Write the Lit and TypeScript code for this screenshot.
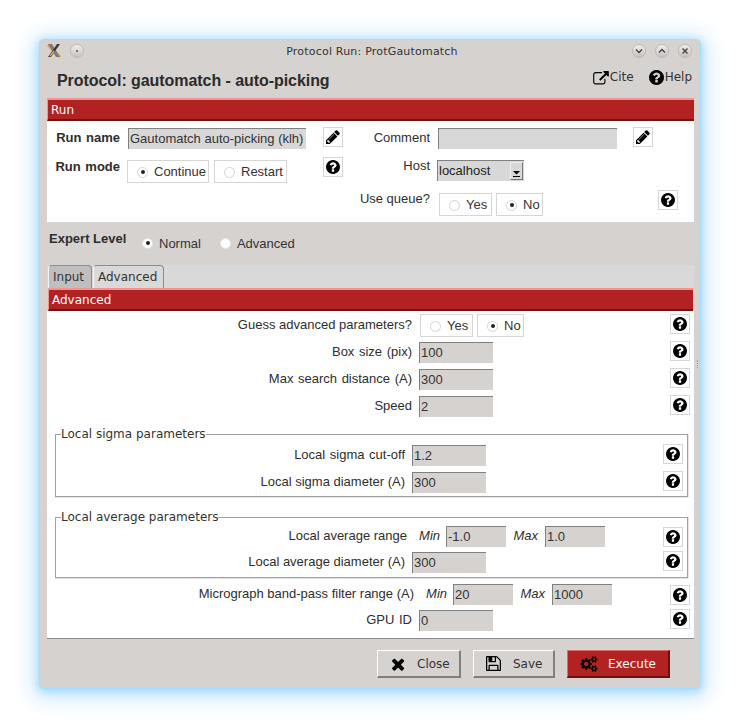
import {LitElement, html, css, svg} from 'lit';
import {customElement} from 'lit/decorators.js';

const HELP = svg`<path d="M896 1376v-192q0-14-9-23t-23-9h-192q-14 0-23 9t-9 23v192q0 14 9 23t23 9h192q14 0 23-9t9-23zm256-672q0-88-55.5-163t-138.5-116-170-41q-243 0-371 213-15 24 8 42l132 100q7 6 19 6 16 0 25-12 53-68 86-92 34-24 86-24 48 0 85.5 26t37.5 59q0 38-20 61t-68 45q-63 28-115.5 86.5t-52.5 125.5v36q0 14 9 23t23 9h192q14 0 23-9t9-23q0-19 21.5-49.5t54.5-49.5q32-18 49-28.5t46-35 44.5-48 28-60.5 12.5-81zm384 192q0 209-103 385.5t-279.5 279.5-385.5 103-385.5-103-279.5-279.5-103-385.5 103-385.5 279.5-279.5 385.5-103 385.5 103 279.5 279.5 103 385.5z"/>`;
const PENCIL = svg`<path d="M491 1536l91-91-235-235-91 91v107h128v128h107zm523-928q0-22-22-22-10 0-17 7l-542 542q-7 7-7 17 0 22 22 22 10 0 17-7l542-542q7-7 7-17zm-54-192l416 416-832 832h-416v-416zm683 96q0 53-37 90l-166 166-416-416 166-165q36-38 90-38 53 0 91 38l235 234q37 39 37 91z"/>`;
const TIMES = svg`<path d="M1490 1322q0 40-28 68l-136 136q-28 28-68 28t-68-28l-294-294-294 294q-28 28-68 28t-68-28l-136-136q-28-28-28-68t28-68l294-294-294-294q-28-28-28-68t28-68l136-136q28-28 68-28t68 28l294 294 294-294q28-28 68-28t68 28l136 136q28 28 28 68t-28 68l-294 294 294 294q28 28 28 68z"/>`;
const FLOPPY = svg`<path d="M512 1536h768v-384h-768v384zm896 0h128v-896q0-14-10-38.5t-20-34.5l-281-281q-10-10-34-20t-39-10v416q0 40-28 68t-68 28h-576q-40 0-68-28t-28-68v-416h-128v1280h128v-416q0-40 28-68t68-28h832q40 0 68 28t28 68v416zm-384-928v-320q0-13-9.5-22.5t-22.5-9.5h-192q-13 0-22.5 9.5t-9.5 22.5v320q0 13 9.5 22.5t22.5 9.5h192q13 0 22.5-9.5t9.5-22.5zm640 32v928q0 40-28 68t-68 28h-1344q-40 0-68-28t-28-68v-1344q0-40 28-68t68-28h928q40 0 88 20t76 48l280 280q28 28 48 76t20 88z"/>`;
const LINK = svg`<path d="M1408 928v320q0 119-84.5 203.5t-203.5 84.5h-832q-119 0-203.5-84.5t-84.5-203.5v-832q0-119 84.5-203.5t203.5-84.5h704q14 0 23 9t9 23v64q0 14-9 23t-23 9h-704q-66 0-113 47t-47 113v832q0 66 47 113t113 47h832q66 0 113-47t47-113v-320q0-14 9-23t23-9h64q14 0 23 9t9 23zm384-864v512q0 26-19 45t-45 19-45-19l-176-176-652 652q-10 10-23 10t-23-10l-114-114q-10-10-10-23t10-23l652-652-176-176q-19-19-19-45t19-45 45-19h512q26 0 45 19t19 45z"/>`;
const COGS = svg`<path d="M896 896q0-106-75-181t-181-75-181 75-75 181 75 181 181 75 181-75 75-181zm768 512q0-52-38-90t-90-38-90 38-38 90q0 53 37.5 90.5t90.5 37.5 90.5-37.5 37.5-90.5zm0-1024q0-52-38-90t-90-38-90 38-38 90q0 53 37.5 90.5t90.5 37.5 90.5-37.5 37.5-90.5zm-384 421v185q0 10-7 19.5t-16 10.5l-155 24q-11 35-32 76 34 48 90 115 7 11 7 20 0 12-7 19-23 30-82.5 89.5t-78.5 59.5q-11 0-21-7l-115-90q-37 19-77 31-11 108-23 155-7 24-30 24h-186q-11 0-20-7.5t-10-17.5l-23-153q-34-10-75-31l-118 89q-7 7-20 7-11 0-21-8-144-133-144-160 0-9 7-19 10-14 41-53t47-61q-23-44-35-82l-152-24q-10-1-17-9.5t-7-19.5v-185q0-10 7-19.5t16-10.5l155-24q11-35 32-76-34-48-90-115-7-11-7-20 0-12 7-20 22-30 82-89t79-59q11 0 21 7l115 90q34-18 77-32 11-108 23-154 7-24 30-24h186q11 0 20 7.5t10 17.5l23 153q34 10 75 31l118-89q8-7 20-7 11 0 21 8 144 133 144 160 0 8-7 19-12 16-42 54t-45 60q23 48 34 82l152 23q10 2 17 10.5t7 19.5zm640 533v140q0 16-149 31-12 27-30 52 51 113 51 138 0 4-4 7-122 71-124 71-8 0-46-47t-52-68q-20 2-30 2t-30-2q-14 21-52 68t-46 47q-2 0-124-71-4-3-4-7 0-25 51-138-18-25-30-52-149-15-149-31v-140q0-16 149-31 13-29 30-52-51-113-51-138 0-4 4-7 4-2 35-20t59-34 30-16q8 0 46 46.5t52 67.5q20-2 30-2t30 2q51-71 92-112l6-2q4 0 124 70 4 3 4 7 0 25-51 138 17 23 30 52 149 15 149 31zm0-1024v140q0 16-149 31-12 27-30 52 51 113 51 138 0 4-4 7-122 71-124 71-8 0-46-47t-52-68q-20 2-30 2t-30-2q-14 21-52 68t-46 47q-2 0-124-71-4-3-4-7 0-25 51-138-18-25-30-52-149-15-149-31v-140q0-16 149-31 13-29 30-52-51-113-51-138 0-4 4-7 4-2 35-20t59-34 30-16q8 0 46 46.5t52 67.5q20-2 30-2t30 2q51-71 92-112l6-2q4 0 124 70 4 3 4 7 0 25-51 138 17 23 30 52 149 15 149 31z"/>`;

const helpBtn = (cls = '') => html`
  <span class="icon-btn ${cls}"><svg width="14" height="14" viewBox="0 128 1536 1536">${HELP}</svg></span>
`;
const editBtn = (cls = '') => html`
  <span class="icon-btn ${cls}"><svg width="14" height="14" viewBox="128 128 1536 1536">${PENCIL}</svg></span>
`;
const radioBox = (name: string, width: number, on = false) => html`
  <span class="radio-box" style="width:${width}px"><i class="radio ${on ? 'on' : ''}"></i>${name}</span>
`;
const field = (value: string, cls = 'wide') => html`
  <input class="field ${cls}" .value=${value} readonly />
`;
const label = (text: string, width: number, cls = 'drop3') => html`
  <span class="label ${cls}" style="width:${width}px">${text}</span>
`;

@customElement('app-root')
class AppRoot extends LitElement {
  static override styles = css`
    :host {
      display: block;
      width: 740px;
      height: 728px;
      background: #fff;
      overflow: hidden;
      font-family: 'Liberation Sans', sans-serif;
      font-size: 13px;
      color: #2e2e2e;
    }

    .stage {
      padding: 40px;
    }

    .window {
      position: relative;
      width: 660px;
      height: 648px;
      box-sizing: border-box;
      background: #d6d2d0;
      border-radius: 4px;
      box-shadow: 0 0 1px 1px #a6dcfb, 0 2px 8px 2px #a4dafb, 0 3px 22px 8px #cfeafd;
    }

    .grip {
      position: absolute;
      right: 2px;
      top: 320px;
      height: 8px;
      border-left: 1px dotted #9a9a9a;
    }

    .titlebar {
      height: 22px;
      display: flex;
      align-items: center;
      padding: 0 8px 0 6px;
    }

    .titlebar__text {
      flex: 1;
      text-align: center;
      font-family: 'DejaVu Sans', sans-serif;
      font-size: 11px;
      letter-spacing: 0.2px;
      color: #333;
      padding-left: 6px;
    }

    .titlebar__side {
      display: flex;
      align-items: center;
      gap: 8px;
      width: 60px;
    }

    .titlebar__side--right {
      justify-content: flex-end;
      gap: 9px;
    }

    .wm-btn {
      width: 14px;
      height: 14px;
      display: block;
    }

    .header {
      height: 36px;
      display: flex;
      justify-content: space-between;
      padding: 0 8px 0 17px;
    }

    .header h1 {
      margin: 10px 0 0;
      font-size: 16px;
      line-height: 18px;
      font-weight: 700;
      letter-spacing: -0.06px;
      color: #2b2b2b;
    }

    .links {
      display: flex;
      align-items: flex-start;
      gap: 15px;
      margin-top: 8px;
      font-family: 'DejaVu Sans', sans-serif;
      font-size: 12px;
      line-height: 15px;
      color: #333;
    }

    .links span {
      display: flex;
      align-items: center;
      gap: 1px;
    }

    .panel-title {
      height: 23px;
      box-sizing: border-box;
      background: #b22222;
      border-top: 2px solid #f09494;
      border-left: 1px solid #f09494;
      border-bottom: 2px solid #741212;
      color: #fff;
      font-family: 'DejaVu Sans', sans-serif;
      font-size: 12px;
      line-height: 21px;
      padding-left: 3px;
    }

    .run {
      margin: 0 6px 0 7px;
      background: #fff;
    }

    .run__grid {
      height: 101px;
      box-sizing: border-box;
      padding-top: 6px;
      display: grid;
      grid-template-columns: 80px 196px 20px 87px 203px 20px 5px 20px;
      grid-template-rows: 30px 33px 32px;
      align-items: start;
    }

    .run__label {
      grid-column: 1;
      font-weight: 700;
      line-height: 16px;
      text-align: right;
      width: 73px;
      word-spacing: 1px;
    }

    .run__label2 {
      grid-column: 4;
      line-height: 16px;
      text-align: right;
    }

    .col-2 {
      grid-column: 2;
    }

    .col-3 {
      grid-column: 3;
    }

    .col-5 {
      grid-column: 5;
    }

    .col-6 {
      grid-column: 6;
    }

    .col-8 {
      grid-column: 8;
    }

    .row-1 {
      grid-row: 1;
    }

    .row-2 {
      grid-row: 2;
    }

    .row-3 {
      grid-row: 3;
    }

    .drop1 {
      margin-top: 1px;
    }

    .drop2 {
      margin-top: 2px;
    }

    .drop3 {
      margin-top: 3px;
    }

    .icon-btn {
      width: 20px;
      height: 20px;
      box-sizing: border-box;
      border: 1px solid #d6d6d6;
      background: #fff;
      display: flex;
      align-items: center;
      justify-content: center;
      flex: none;
      fill: #000;
    }

    .field {
      display: block;
      height: 21px;
      box-sizing: border-box;
      padding: 0 0 2px 1px;
      margin: 0;
      border: 0;
      border-top: 1px solid #808080;
      border-left: 1px solid #808080;
      border-radius: 0;
      outline: none;
      background: #d6d2d0;
      color: #333;
      font: 13px 'Liberation Sans', sans-serif;
      flex: none;
    }

    .wide {
      width: 74px;
    }

    .narrow {
      width: 60px;
    }

    .run .field {
      background: #d8d8d8;
    }

    .run .name-field {
      width: 178px;
      margin: 1px 0 0 1px;
    }

    .run .comment-field {
      width: 179px;
      margin: 1px 0 0 8px;
    }

    .combo {
      margin: 3px 0 0 7px;
      width: 87px;
      height: 21px;
      box-sizing: border-box;
      border-top: 1px solid #808080;
      border-left: 1px solid #808080;
      background: #d8d8d8;
      display: flex;
      justify-content: space-between;
      padding: 1px 1px 0 1px;
      line-height: 17px;
      color: #222;
    }

    .combo__arrow {
      width: 13px;
      height: 18px;
      box-sizing: border-box;
      border-top: 1px solid #eee;
      border-left: 1px solid #eee;
      border-right: 1px solid #777;
      border-bottom: 1px solid #777;
      display: flex;
      align-items: flex-end;
      justify-content: center;
      padding-bottom: 2px;
    }

    .radio-row {
      display: flex;
      gap: 4px;
    }

    .radio-row--mode {
      gap: 5px;
    }

    .queue {
      margin-left: 9px;
    }

    .radio-box {
      display: flex;
      align-items: center;
      height: 23px;
      box-sizing: border-box;
      border: 1px solid #d8d6d4;
      padding: 1px 0 0 9px;
      background: #fff;
      line-height: 16px;
      color: #333;
    }

    .radio {
      width: 11px;
      height: 11px;
      box-sizing: border-box;
      border: 1px solid #d4d4d4;
      border-radius: 50%;
      background: #fff;
      margin-right: 6px;
      display: flex;
      align-items: center;
      justify-content: center;
      flex: none;
    }

    .radio.on::after {
      content: '';
      width: 4px;
      height: 4px;
      border-radius: 50%;
      background: #222;
    }

    .expert {
      height: 43px;
      display: flex;
      padding-left: 9px;
    }

    .expert b {
      line-height: 16px;
      margin-top: 9px;
      width: 93px;
    }

    .expert__opt {
      display: flex;
      align-items: center;
      height: 16px;
      margin-top: 13px;
      color: #333;
    }

    .expert__opt .radio {
      border-color: #e6e4e2;
      margin-right: 6px;
    }

    .expert__opt + .expert__opt {
      margin-left: 19px;
    }

    .tabs {
      margin: 0 6px 0 7px;
      height: 23px;
      background: #d9d9d9;
      display: flex;
      padding-left: 1px;
      gap: 1px;
      font-family: 'DejaVu Sans', sans-serif;
      font-size: 12px;
      line-height: 21px;
    }

    .tab {
      box-sizing: border-box;
      height: 23px;
      padding: 1px 0 0 4px;
      border: 1px solid #8c8c8c;
      border-bottom: 0;
      border-left-color: #f4f4f4;
      border-radius: 4px 4px 0 0;
      color: #333;
    }

    .tab--input {
      width: 44px;
      background: #bfbfbf;
    }

    .tab--active {
      width: 71px;
      background: #d9d9d9;
    }

    .advanced {
      margin: 0 7px 0 8px;
    }

    .advanced__body {
      margin: 0 -1px;
      height: 328px;
      box-sizing: border-box;
      background: #fff;
      border-bottom: 1px solid #8c8c8c;
      padding: 3px 4px 0 1px;
    }

    .row {
      display: flex;
      align-items: flex-start;
      height: 27px;
    }

    .row--short {
      height: 25px;
    }

    .label {
      flex: none;
      text-align: right;
      line-height: 16px;
      margin-right: 7px;
    }

    .loose {
      word-spacing: 1px;
    }

    .choice {
      margin-left: 1px;
    }

    .push {
      margin-left: auto;
    }

    .group {
      margin: 0;
      padding: 2px 4px 0 0;
      border: 1px solid #a0a0a0;
      box-shadow: 0 1px 0 #e4e4e4, 1px 0 0 #e4e4e4;
      box-sizing: border-box;
      min-width: 0;
    }

    .group legend {
      padding: 0;
      margin-left: 5px;
      font-family: 'DejaVu Sans', sans-serif;
      font-size: 12px;
      line-height: 16px;
      color: #333;
    }

    .group--sigma {
      margin: 4px 2px 0 7px;
      height: 71px;
    }

    .group--average {
      margin: 12px 2px 0 7px;
      height: 69px;
      padding-top: 1px;
    }

    .range-tag {
      flex: none;
      font-style: italic;
      line-height: 16px;
      margin-top: 2px;
      text-align: right;
      width: 39px;
      padding-right: 7px;
      box-sizing: border-box;
    }

    .range-tag--first {
      width: 32px;
      padding-right: 6px;
    }

    .after-group {
      margin-top: 6px;
      height: 25px;
    }

    .actions {
      display: flex;
      justify-content: flex-end;
      gap: 12px;
      padding: 11px 30px 0 0;
    }

    .btn {
      height: 28px;
      box-sizing: border-box;
      display: flex;
      align-items: center;
      font-family: 'DejaVu Sans', sans-serif;
      font-size: 12px;
      color: #333;
      border: 1px solid;
      border-color: #fff #808080 #808080 #fff;
      border-width: 1px 2px 2px 1px;
      background: #d6d2d0;
      fill: #000;
    }

    .btn--close {
      width: 84px;
      padding-left: 13px;
      gap: 12px;
    }

    .btn--save {
      width: 82px;
      padding-left: 12px;
      gap: 12px;
    }

    .btn--exec {
      width: 103px;
      padding-left: 12px;
      gap: 10px;
      background: #b22222;
      color: #fff;
      border-color: #e06a6a #6e1010 #6e1010 #e06a6a;
    }
  `;

  private wmButton(glyph: unknown) {
    return html`<svg class="wm-btn" viewBox="0 0 14 14">
      <defs>
        <linearGradient id="wm" x1="0" y1="0" x2="0" y2="1">
          <stop offset="0" stop-color="#f2f0ef"></stop>
          <stop offset="1" stop-color="#c4c0be"></stop>
        </linearGradient>
      </defs>
      <circle cx="7" cy="7" r="6.5" fill="url(#wm)" stroke="#bdb9b7"></circle>
      ${glyph}
    </svg>`;
  }

  private renderTitlebar() {
    return html`
      <div class="titlebar">
        <div class="titlebar__side">
          <svg width="16" height="16" viewBox="0 0 16 16">
            <path d="M2 2l12 12" stroke="#f0a040" stroke-width="3"></path>
            <path d="M2 1l4 0 8 13-4 0z" fill="#7c7c7c"></path>
            <path d="M14 1l-3 0L2 14l3 0z" fill="#3c3c3c"></path>
            <path d="M4 13L8 8" stroke="#eda24a" stroke-width="1.5"></path>
          </svg>
          ${this.wmButton(svg`<circle cx="7" cy="7" r="1" fill="#555"></circle>`)}
        </div>
        <div class="titlebar__text">Protocol Run: ProtGautomatch</div>
        <div class="titlebar__side titlebar__side--right">
          ${this.wmButton(svg`<path d="M4 5.5l3 3 3-3" fill="none" stroke="#444" stroke-width="1.4"></path>`)}
          ${this.wmButton(svg`<path d="M4 8.5l3-3 3 3" fill="none" stroke="#444" stroke-width="1.4"></path>`)}
          ${this.wmButton(svg`<path d="M4.5 4.5l5 5M9.5 4.5l-5 5" fill="none" stroke="#444" stroke-width="1.4"></path>`)}
        </div>
      </div>
    `;
  }

  private renderRun() {
    return html`
      <section class="run">
        <div class="panel-title">Run</div>
        <div class="run__grid">
          <span class="run__label row-1 drop3">Run name</span>
          <span class="col-2 row-1">${field('Gautomatch auto-picking (klh)', 'name-field')}</span>
          ${editBtn('col-3 row-1')}
          <span class="run__label2 row-1 drop3">Comment</span>
          <span class="col-5 row-1">${field('', 'comment-field')}</span>
          ${editBtn('col-6 row-1')}

          <span class="run__label row-2 drop2">Run mode</span>
          <div class="radio-row radio-row--mode col-2 row-2 drop3">
            ${radioBox('Continue', 82, true)}${radioBox('Restart', 73)}
          </div>
          ${helpBtn('col-3 row-2')}
          <span class="run__label2 row-2 drop1">Host</span>
          <div class="combo col-5 row-2">
            localhost
            <span class="combo__arrow">
              <svg width="7" height="6" viewBox="0 0 7 6">
                <path d="M0 0h7L3.5 3.5z M0 5h7v1H0z" fill="#000"></path>
              </svg>
            </span>
          </div>

          <span class="run__label2 row-3 drop1">Use queue?</span>
          <div class="radio-row col-5 row-3 queue drop3">
            ${radioBox('Yes', 53)}${radioBox('No', 47, true)}
          </div>
          ${helpBtn('col-8 row-3')}
        </div>
      </section>
    `;
  }

  private renderAdvanced() {
    return html`
      <section class="advanced">
        <div class="panel-title">Advanced</div>
        <div class="advanced__body">
          <div class="row">
            ${label('Guess advanced parameters?', 364)}
            <div class="radio-row choice">${radioBox('Yes', 53)}${radioBox('No', 47, true)}</div>
            ${helpBtn('push')}
          </div>
          <div class="row">
            ${label('Box size (pix)', 364, 'drop3 loose')}
            <span class="drop1">${field('100')}</span>
            ${helpBtn('push')}
          </div>
          <div class="row">
            ${label('Max search distance (A)', 364, 'drop3 loose')}
            <span class="drop1">${field('300')}</span>
            ${helpBtn('push')}
          </div>
          <div class="row">
            ${label('Speed', 364)}
            <span class="drop1">${field('2')}</span>
            ${helpBtn('push')}
          </div>

          <fieldset class="group group--sigma">
            <legend>Local sigma parameters</legend>
            <div class="row">
              ${label('Local sigma cut-off', 349, 'drop3 loose')}
              <span class="drop1">${field('1.2')}</span>
              ${helpBtn('push')}
            </div>
            <div class="row row--short">
              ${label('Local sigma diameter (A)', 349)}
              <span class="drop1">${field('300')}</span>
              ${helpBtn('push')}
            </div>
          </fieldset>

          <fieldset class="group group--average">
            <legend>Local average parameters</legend>
            <div class="row row--short">
              ${label('Local average range', 351, 'drop2')}
              <span class="range-tag range-tag--first">Min</span>
              ${field('-1.0', 'narrow')}
              <span class="range-tag">Max</span>
              ${field('1.0', 'narrow')}
              ${helpBtn('push drop1')}
            </div>
            <div class="row row--short">
              ${label('Local average diameter (A)', 349)}
              <span class="drop1">${field('300')}</span>
              ${helpBtn('push')}
            </div>
          </fieldset>

          <div class="row after-group">
            ${label('Micrograph band-pass filter range (A)', 366, 'drop2')}
            <span class="range-tag range-tag--first">Min</span>
            ${field('20', 'narrow')}
            <span class="range-tag">Max</span>
            ${field('1000', 'narrow')}
            ${helpBtn('push drop1')}
          </div>
          <div class="row row--short">
            ${label('GPU ID', 364, 'drop3 loose')}
            <span class="drop1">${field('0')}</span>
            ${helpBtn('push')}
          </div>
        </div>
      </section>
    `;
  }

  override render() {
    return html`
      <div class="stage">
        <div class="window">
          <i class="grip"></i>
          ${this.renderTitlebar()}
          <div class="header">
            <h1>Protocol: gautomatch - auto-picking</h1>
            <div class="links">
              <span><svg width="16" height="14" viewBox="0 0 1792 1600">${LINK}</svg>Cite</span>
              <span><svg width="15" height="15" viewBox="0 128 1536 1536">${HELP}</svg>Help</span>
            </div>
          </div>
          ${this.renderRun()}
          <div class="expert">
            <b>Expert Level</b>
            <span class="expert__opt"><i class="radio on"></i>Normal</span>
            <span class="expert__opt"><i class="radio"></i>Advanced</span>
          </div>
          <div class="tabs">
            <span class="tab tab--input">Input</span>
            <span class="tab tab--active">Advanced</span>
          </div>
          ${this.renderAdvanced()}
          <div class="actions">
            <span class="btn btn--close">
              <svg width="14" height="14" viewBox="200 200 1376 1376">${TIMES}</svg>Close
            </span>
            <span class="btn btn--save">
              <svg width="15" height="15" viewBox="128 128 1536 1536">${FLOPPY}</svg>Save
            </span>
            <span class="btn btn--exec">
              <svg width="18" height="16" viewBox="0 0 1920 1792">${COGS}</svg>Execute
            </span>
          </div>
        </div>
      </div>
    `;
  }
}

declare global {
  interface HTMLElementTagNameMap {
    'app-root': AppRoot;
  }
}
